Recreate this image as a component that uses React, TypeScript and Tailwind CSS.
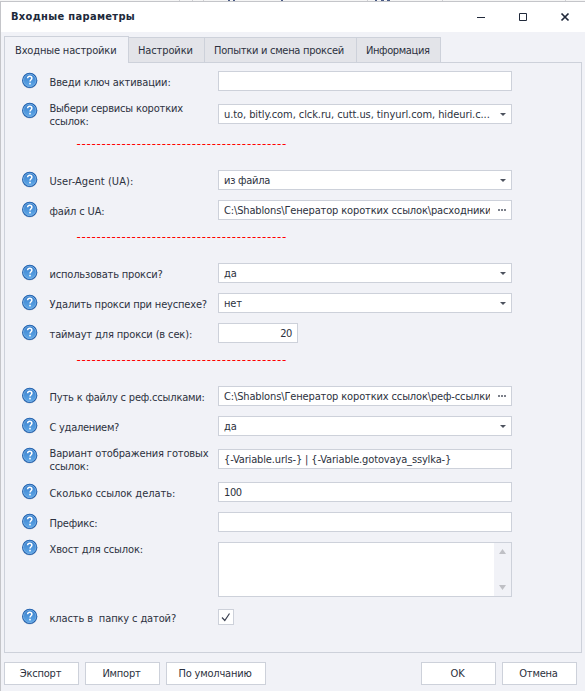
import { ReactNode } from "react";

const Help = () => (
  <svg className="mt-px h-[17px] w-4 shrink-0" viewBox="0.3 0 16 17">
    <defs>
      <linearGradient id="help" x1="0" y1="0" x2="0" y2="1">
        <stop offset="0" stopColor="#3a80cc" />
        <stop offset="1" stopColor="#5fa8e8" />
      </linearGradient>
    </defs>
    <circle cx="8" cy="9" r="7.6" fill="#c3cad6" />
    <circle cx="8" cy="8.4" r="7.6" fill="#1b5cab" />
    <circle cx="8" cy="8.4" r="6.3" fill="url(#help)" stroke="#8cc0ee" strokeWidth="0.7" />
    <path
      d="M5.9 6.3C6 5 6.9 4.3 8 4.3s2.2.7 2.2 1.9c0 1.5-1.9 1.6-1.9 3.3"
      fill="none"
      stroke="#fff"
      strokeWidth="1.5"
    />
    <rect x="7.5" y="10.8" width="1.6" height="1.6" fill="#fff" />
  </svg>
);

interface RowProps {
  label: ReactNode;
  tall?: boolean;
  spacing?: string;
  children: ReactNode;
}

const Row = ({ label, tall, spacing = "tracking-[-0.13px]", children }: RowProps) => (
  <div className={`flex items-start ${tall ? "h-9" : "h-[30px]"}`}>
    <Help />
    <div
      className={`ml-[11px] w-[169px] shrink-0 whitespace-pre pl-[0.5px] leading-[13px] ${spacing} ${tall ? "pt-px" : "pt-[5px]"}`}
    >
      {label}
    </div>
    <div className={tall ? "pt-[3px]" : ""}>{children}</div>
  </div>
);

interface FieldProps {
  value?: ReactNode;
  kind?: "text" | "select" | "file";
  spacing?: string;
}

const Field = ({ value, kind = "text", spacing = "tracking-[-0.14px]" }: FieldProps) => (
  <div className="flex h-5 w-[294px] items-center border border-[#cdd1da] bg-white pl-[5px]">
    <div className={`h-[18px] w-[266px] shrink-0 overflow-hidden whitespace-pre leading-[19px] ${spacing}`}>
      {value}
    </div>
    {kind === "select" && (
      <svg className="ml-[10px] h-[3px] w-[6px]" viewBox="0 0 6 3">
        <path d="M0 0h6L3 3z" fill="#4d525e" />
      </svg>
    )}
    {kind === "file" && (
      <svg className="ml-2 h-[2px] w-2" viewBox="0 0 8 2">
        <path d="M0 0h2v2H0zM3 0h2v2H3zM6 0h2v2H6z" fill="#7c808a" />
      </svg>
    )}
  </div>
);

const Separator = () => (
  <div className="h-[33px] overflow-hidden whitespace-nowrap pl-[54.5px] text-[13px] leading-[13px] tracking-[0.79px] text-[#f00]">
    ------------------------------------------
  </div>
);

const Button = ({ wide, children }: { wide?: boolean; children: ReactNode }) => (
  <button
    className={`h-[23px] border border-[#cdd1da] bg-white pr-[2px] text-center leading-[22px] tracking-[-0.2px] ${wide ? "w-[100px]" : "w-[75px]"}`}
  >
    {children}
  </button>
);

export default function App() {
  return (
    <div className="h-[691px] w-[585px] overflow-hidden bg-[#f1f2f7] font-['DejaVu_Sans_Condensed','DejaVu_Sans',sans-serif] text-[11px] text-[#2c3140]">
      <div className="h-px bg-[#f5f5f5]">
        {/* sliver of the window behind the dialog */}
        <svg className="h-px w-[585px]" viewBox="0 0 585 1">
          <path d="M228 .5h2M233 .5h2M281 .5h2M375 .5h2M381 .5h3M387 .5h3" stroke="#4a5a85" />
          <path d="M179 .5h1M192 .5h1M203 .5h1M367 .5h1M442 .5h1M565 .5h1" stroke="#cfcfd3" />
        </svg>
      </div>
      <div className="flex h-[690px] flex-col border-l border-t border-[#c4c5c9]">
        <div className="flex h-[30px] shrink-0 items-center bg-white pl-[10px] text-[#20293a]">
          <span className="font-bold tracking-[0.33px]">Входные параметры</span>
          <svg className="ml-auto mr-[15px] h-[10px] w-[94px]" viewBox="0 0 94 10">
            <path d="M1 5.5h8M43.5 1.5h7v7h-7z" fill="none" stroke="#20293a" strokeWidth="1" />
            <path d="M85.5 1.5l7 7M92.5 1.5l-7 7" fill="none" stroke="#20293a" strokeWidth="1.7" />
          </svg>
        </div>
        <div className="flex shrink-0 items-end pl-[3px] pt-[4px]">
          <div className="z-10 -mb-px h-[27px] w-[125px] whitespace-nowrap border border-b-0 border-[#cdd1da] bg-[#f1f2f7] pl-[10px] leading-[27px] tracking-[-0.15px]">
            Входные настройки
          </div>
          <div className="h-[25px] w-[76px] border-r border-t border-[#cdd1da] bg-[#e3e4e9] pl-[9px] leading-[25px] tracking-[-0.12px]">
            Настройки
          </div>
          <div className="h-[25px] w-[152px] whitespace-nowrap border-r border-t border-[#cdd1da] bg-[#e3e4e9] pl-[9px] leading-[25px] tracking-[-0.27px]">
            Попытки и смена проксей
          </div>
          <div className="h-[25px] w-[84px] border-r border-t border-[#cdd1da] bg-[#e3e4e9] pl-[9px] leading-[25px] tracking-[-0.38px]">
            Информация
          </div>
        </div>
        <div className="ml-[3px] h-[591px] w-[578px] shrink-0 border border-[#cdd1da] pl-[17px] pt-[8px]">
          <Row label="Введи ключ активации:">
            <Field />
          </Row>
          <Row tall spacing="tracking-[-0.18px]" label={"Выбери сервисы коротких\nссылок:"}>
            <Field
              kind="select"
              spacing="tracking-[-0.08px]"
              value="u.to, bitly.com, clck.ru, cutt.us, tinyurl.com, hideuri.c..."
            />
          </Row>
          <Separator />
          <Row label="User-Agent (UA):" spacing="tracking-[0.07px]">
            <Field kind="select" value="из файла" spacing="tracking-[-0.25px]" />
          </Row>
          <Row label="файл с UA:">
            <Field kind="file" spacing="tracking-[-0.14px]" value={"C:\\Shablons\\Генератор коротких ссылок\\расходники"} />
          </Row>
          <Separator />
          <Row label="использовать прокси?" spacing="tracking-[-0.17px]">
            <Field kind="select" value="да" />
          </Row>
          <Row label="Удалить прокси при неуспехе?" spacing="tracking-[-0.17px]">
            <Field kind="select" value="нет" spacing="tracking-[-0.2px]" />
          </Row>
          <Row label="таймаут для прокси (в сек):">
            <div className="h-5 w-20 border border-[#cdd1da] bg-white pr-[5px] text-right leading-[19px] tracking-[-0.4px]">
              20
            </div>
          </Row>
          <Separator />
          <Row label="Путь к файлу с реф.ссылками:" spacing="tracking-[-0.18px]">
            <Field kind="file" spacing="tracking-[-0.14px]" value={"C:\\Shablons\\Генератор коротких ссылок\\реф-ссылки"} />
          </Row>
          <Row label="С удалением?" spacing="tracking-[-0.28px]">
            <Field kind="select" value="да" />
          </Row>
          <Row tall label={"Вариант отображения готовых\nссылок:"} spacing="tracking-[-0.15px]">
            <Field value="{-Variable.urls-} | {-Variable.gotovaya_ssylka-}" />
          </Row>
          <Row label="Сколько ссылок делать:" spacing="tracking-[-0.04px]">
            <Field value="100" spacing="tracking-[-0.4px]" />
          </Row>
          <Row label="Префикс:" spacing="tracking-[-0.2px]">
            <Field />
          </Row>
          <div className="-mt-1 h-[69px]">
            <Row label="Хвост для ссылок:">
              <div className="mt-1 flex h-[55px] w-[294px] justify-end border border-[#cdd1da] bg-white">
                <div className="flex w-[17px] flex-col items-center justify-between bg-[#f1f2f7] py-[6px]">
                  <svg className="h-[5px] w-[7px]" viewBox="0 0 7 5">
                    <path d="M3.5 0L7 5H0z" fill="#bfc0c5" />
                  </svg>
                  <svg className="h-[5px] w-[7px]" viewBox="0 0 7 5">
                    <path d="M0 0h7L3.5 5z" fill="#bfc0c5" />
                  </svg>
                </div>
              </div>
            </Row>
          </div>
          <Row label="класть в  папку с датой?">
            <div className="mt-[2px] h-4 w-4 border border-[#cdd1da] bg-white">
              <svg className="h-[14px] w-[14px]" viewBox="0 0 14 14">
                <path d="M3 7.5l2.8 3L10.5 3.5" fill="none" stroke="#3a4050" strokeWidth="1.2" />
              </svg>
            </div>
          </Row>
        </div>
        <div className="flex pl-[3px] pr-2 pt-[9px]">
          <div className="flex gap-[6px]">
            <Button>Экспорт</Button>
            <Button>Импорт</Button>
            <Button wide>По умолчанию</Button>
          </div>
          <div className="ml-auto flex gap-[6px]">
            <Button>OK</Button>
            <Button>Отмена</Button>
          </div>
        </div>
      </div>
    </div>
  );
}
